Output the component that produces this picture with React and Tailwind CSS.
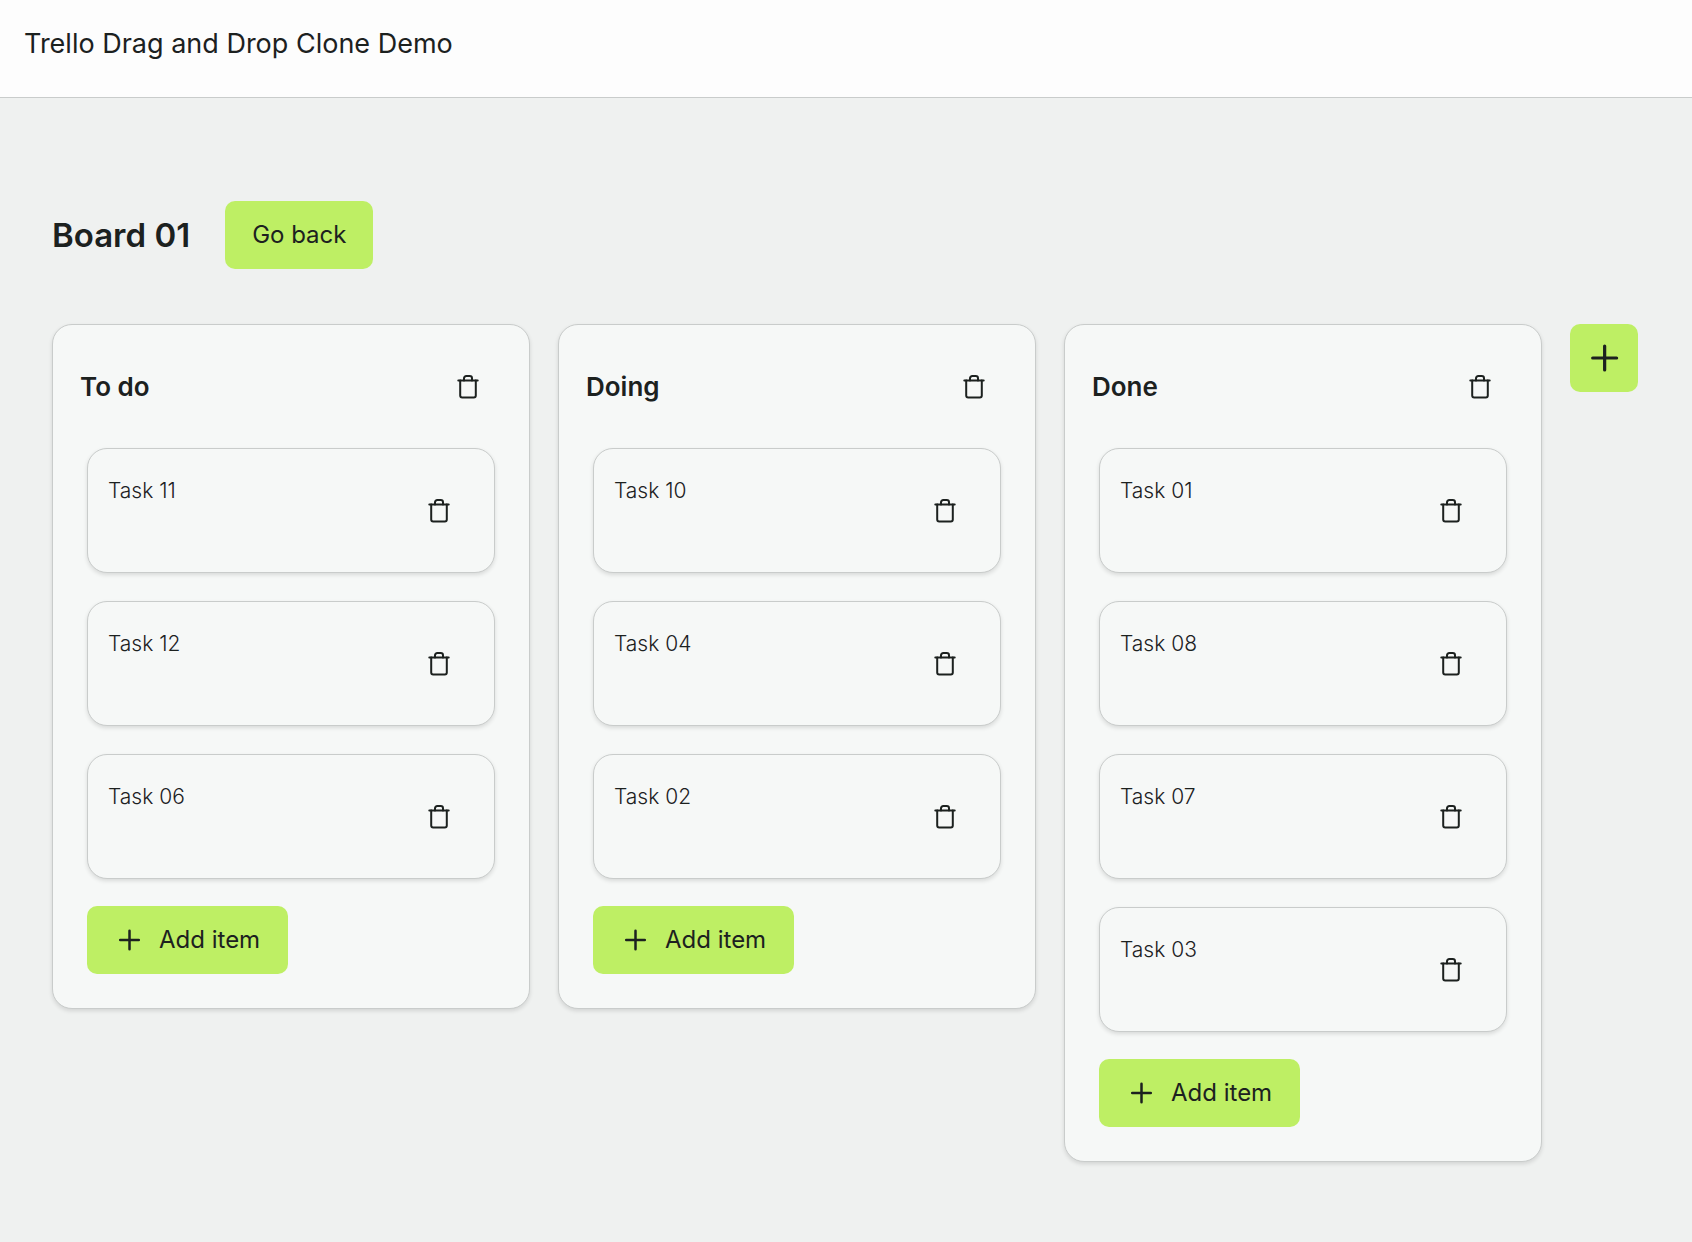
import React from "react";

const columns = [
  { title: "To do", tasks: ["Task 11", "Task 12", "Task 06"] },
  { title: "Doing", tasks: ["Task 10", "Task 04", "Task 02"] },
  { title: "Done", tasks: ["Task 01", "Task 08", "Task 07", "Task 03"] },
];

function TrashIcon() {
  return (
    <svg
      viewBox="0 0 28 28"
      className="size-7"
      fill="none"
      stroke="currentColor"
      strokeWidth="2"
      strokeLinecap="round"
      strokeLinejoin="round"
      aria-hidden="true"
    >
      <path d="M4.3 7.5h19.4" />
      <path d="M6.2 7.5v15a2 2 0 0 0 2 2h11.6a2 2 0 0 0 2-2v-15" />
      <path d="M10 7.5V5.3A2.3 2.3 0 0 1 12.3 3h3.4A2.3 2.3 0 0 1 18 5.3v2.2" />
    </svg>
  );
}

function PlusIcon({ className }) {
  return (
    <svg
      viewBox="0 0 28 28"
      className={className}
      fill="none"
      stroke="currentColor"
      strokeWidth="2.5"
      strokeLinecap="round"
      aria-hidden="true"
    >
      <path d="M14.5 4.7v18.6M5.2 14h18.6" />
    </svg>
  );
}

function DeleteButton({ label }) {
  return (
    <button
      type="button"
      aria-label={label}
      className="size-[68px] shrink-0 flex items-center justify-center cursor-pointer"
    >
      <TrashIcon />
    </button>
  );
}

function Task({ name }) {
  return (
    <li className="h-[125px] pl-5 pr-[21px] py-7 flex items-start justify-between rounded-[20px] border border-[#c9cccb] bg-[#f6f8f7] shadow-[0_2px_4px_rgba(0,0,0,0.12)]">
      <span className="text-[21px] leading-7 font-light">{name}</span>
      <DeleteButton label={`Delete ${name}`} />
    </li>
  );
}

function Column({ title, tasks }) {
  return (
    <section className="w-[478px] shrink-0 pb-[34px] rounded-[20px] border border-[#c9cccb] bg-[#f6f8f7] shadow-[0_2px_4px_rgba(0,0,0,0.12)]">
      <div className="pt-7 px-[27px] flex items-center justify-between">
        <h2 className="text-[26px] leading-9 font-semibold">{title}</h2>
        <DeleteButton label={`Delete ${title}`} />
      </div>

      <div className="mt-[27px] px-[34px]">
        <ul className="flex flex-col gap-7">
          {tasks.map((task) => (
            <Task key={task} name={task} />
          ))}
        </ul>

        <button
          type="button"
          className="mt-[27px] h-[68px] px-7 flex items-center gap-4 rounded-[10px] bg-[#beef64] text-2xl cursor-pointer"
        >
          <PlusIcon className="size-7" />
          Add item
        </button>
      </div>
    </section>
  );
}

export default function App() {
  return (
    <div className="min-h-screen bg-[#eff1f0] text-[#1c211f] font-['Inter',sans-serif]">
      <header className="h-[98px] px-6 pt-6 border-b border-[#c9cccb] bg-[#fdfdfd]">
        <div className="text-[27px] leading-10">
          Trello Drag and Drop Clone Demo
        </div>
      </header>

      <main className="px-[52px] pt-[103px] pb-20">
        <div className="flex items-center gap-[35px]">
          <h1 className="text-[33px] leading-10 font-semibold">Board 01</h1>
          <button
            type="button"
            className="h-[68px] px-[27px] rounded-[10px] bg-[#beef64] text-2xl cursor-pointer"
          >
            Go back
          </button>
        </div>

        <div className="mt-[55px] flex items-start gap-7">
          {columns.map((column) => (
            <Column key={column.title} {...column} />
          ))}
          <button
            type="button"
            aria-label="Add column"
            className="size-[68px] shrink-0 flex items-center justify-center rounded-[10px] bg-[#beef64] cursor-pointer"
          >
            <PlusIcon className="size-9" />
          </button>
        </div>
      </main>
    </div>
  );
}
